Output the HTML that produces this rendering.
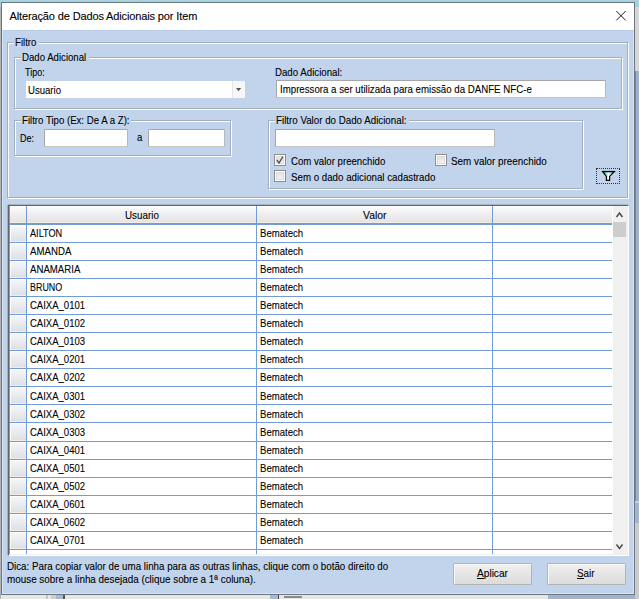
<!DOCTYPE html>
<html><head><meta charset="utf-8"><style>
html,body{margin:0;padding:0;}
body{width:639px;height:599px;position:relative;overflow:hidden;font-family:"Liberation Sans", sans-serif;font-size:11px;}
.t{position:absolute;white-space:nowrap;line-height:13px;transform-origin:0 0;-webkit-text-stroke:0.1px #000;}
u{text-decoration:underline;text-underline-offset:0px;}
</style></head><body>
<div style="position:absolute;left:0px;top:0px;width:639px;height:599px;background:#e6e6e6;"></div>
<div style="position:absolute;left:0px;top:0px;width:639px;height:7px;background:#a6d2de;"></div>
<div style="position:absolute;left:0px;top:7px;width:1px;height:592px;background:#b4b4b4;"></div>
<div style="position:absolute;left:635px;top:7px;width:4px;height:64px;background:#d6d6d6;"></div>
<div style="position:absolute;left:635px;top:71px;width:4px;height:430px;background:#9fb1c9;"></div>
<div style="position:absolute;left:635px;top:71px;width:1px;height:430px;background:#7a8594;"></div>
<div style="position:absolute;left:635px;top:501px;width:4px;height:2px;background:#d0d0d0;"></div>
<div style="position:absolute;left:635px;top:503px;width:4px;height:20px;background:#a5b6cc;"></div>
<div style="position:absolute;left:635px;top:523px;width:4px;height:76px;background:#c9cbcd;"></div>
<div style="position:absolute;left:548px;top:595px;width:87px;height:4px;background:#a3b3cb;"></div>
<div style="position:absolute;left:46px;top:595px;width:2px;height:4px;background:#c4c4c4;"></div>
<div style="position:absolute;left:51px;top:595px;width:5px;height:4px;background:#cfcfcf;"></div>
<div style="position:absolute;left:56px;top:595px;width:7px;height:4px;background:#a9b9d0;"></div>
<div style="position:absolute;left:63px;top:595px;width:2px;height:4px;background:#555;"></div>
<div style="position:absolute;left:270px;top:595px;width:8px;height:4px;background:#a9b9d0;"></div>
<div style="position:absolute;left:278px;top:595px;width:1px;height:4px;background:#444;"></div>
<div style="position:absolute;left:284px;top:596px;width:18px;height:2px;background:#8a8a8a;"></div>
<div style="position:absolute;left:1px;top:2px;width:634px;height:593px;box-sizing:border-box;border:1px solid #6e7681;background:#fff;"></div>
<div style="position:absolute;left:2px;top:30px;width:632px;height:564px;background:#c2d4eb;"></div>
<div style="position:absolute;left:2px;top:30px;width:1px;height:564px;background:#d3e4fb;"></div>
<div style="position:absolute;left:633px;top:30px;width:1px;height:564px;background:#d3e4fb;"></div>
<div style="position:absolute;left:2px;top:593px;width:632px;height:1px;background:#d3e4fb;"></div>
<div style="position:absolute;left:2px;top:30px;width:632px;height:1px;background:#b9cce6;"></div>
<div class="t" style="left:9.5px;top:10px;letter-spacing:-0.13px;">Alteração de Dados Adicionais por Item</div>
<svg style="position:absolute;left:0;top:0" width="639" height="40"><path d="M616.3 11 L625.7 20.4 M625.7 11 L616.3 20.4" stroke="#1a1a1a" stroke-width="1" fill="none"/></svg>
<div style="position:absolute;left:8px;top:43px;width:621px;height:156px;box-sizing:border-box;border:1px solid #fff;"></div>
<div style="position:absolute;left:7px;top:42px;width:621px;height:156px;box-sizing:border-box;border:1px solid #a4aebb;"></div>
<div style="position:absolute;left:13.5px;top:41px;width:25px;height:4px;background:#c2d4eb;"></div>
<div class="t" style="left:14.5px;top:36px;transform:scaleX(0.875);color:#000;">Filtro</div>
<div style="position:absolute;left:15px;top:58px;width:608px;height:52px;box-sizing:border-box;border:1px solid #fff;"></div>
<div style="position:absolute;left:14px;top:57px;width:608px;height:52px;box-sizing:border-box;border:1px solid #a4aebb;"></div>
<div style="position:absolute;left:20.5px;top:56px;width:68px;height:4px;background:#c2d4eb;"></div>
<div class="t" style="left:21.5px;top:51px;transform:scaleX(0.875);color:#000;">Dado Adicional</div>
<div style="position:absolute;left:15px;top:121px;width:217px;height:36px;box-sizing:border-box;border:1px solid #fff;"></div>
<div style="position:absolute;left:14px;top:120px;width:217px;height:36px;box-sizing:border-box;border:1px solid #a4aebb;"></div>
<div style="position:absolute;left:20.5px;top:119px;width:110px;height:4px;background:#c2d4eb;"></div>
<div class="t" style="left:21.5px;top:114px;transform:scaleX(0.875);color:#000;">Filtro Tipo (Ex: De A a Z):</div>
<div style="position:absolute;left:269px;top:121px;width:315px;height:69px;box-sizing:border-box;border:1px solid #fff;"></div>
<div style="position:absolute;left:268px;top:120px;width:315px;height:69px;box-sizing:border-box;border:1px solid #a4aebb;"></div>
<div style="position:absolute;left:274.5px;top:119px;width:134px;height:4px;background:#c2d4eb;"></div>
<div class="t" style="left:275.5px;top:114px;transform:scaleX(0.887);color:#000;">Filtro Valor do Dado Adicional:</div>
<div class="t" style="left:25px;top:66px;transform:scaleX(0.82);color:#000;">Tipo:</div>
<div style="position:absolute;left:26px;top:81px;width:219px;height:17px;background:#fff;"></div>
<div style="position:absolute;left:232px;top:81px;width:1px;height:17px;background:#e6e6e6;"></div>
<div style="position:absolute;left:233px;top:81px;width:12px;height:17px;background:#f7f7f7;"></div>
<svg style="position:absolute;left:0;top:0" width="260" height="100"><path d="M236 88 L241.2 88 L238.6 91.2 Z" fill="#555"/></svg>
<div class="t" style="left:28px;top:84px;transform:scaleX(0.87);color:#000;">Usuario</div>
<div class="t" style="left:275px;top:66px;transform:scaleX(0.88);color:#000;">Dado Adicional:</div>
<div style="position:absolute;left:276px;top:80px;width:330px;height:18px;box-sizing:border-box;border:1px solid #a6a6a6;border-bottom-color:#c4c4c4;border-right-color:#b8b8b8;background:#fff;border-radius:1px;"></div>
<div class="t" style="left:280px;top:83px;transform:scaleX(0.88);color:#000;">Impressora a ser utilizada para emissão da DANFE NFC-e</div>
<div class="t" style="left:19.75px;top:132px;transform:scaleX(0.82);color:#000;">De:</div>
<div style="position:absolute;left:44px;top:129px;width:84px;height:18px;box-sizing:border-box;border:1px solid #a6a6a6;border-bottom-color:#c4c4c4;border-right-color:#b8b8b8;background:#fff;border-radius:1px;"></div>
<div class="t" style="left:136.5px;top:131px;transform:scaleX(0.87);color:#000;">a</div>
<div style="position:absolute;left:148px;top:129px;width:77px;height:18px;box-sizing:border-box;border:1px solid #a6a6a6;border-bottom-color:#c4c4c4;border-right-color:#b8b8b8;background:#fff;border-radius:1px;"></div>
<div style="position:absolute;left:275px;top:129px;width:220px;height:18px;box-sizing:border-box;border:1px solid #a6a6a6;border-bottom-color:#c4c4c4;border-right-color:#b8b8b8;background:#fff;border-radius:1px;"></div>
<div style="position:absolute;left:274px;top:154px;width:12px;height:12px;box-sizing:border-box;border:1px solid #8e8f8f;background:#fcfcfc;"></div>
<div style="position:absolute;left:276px;top:156px;width:8px;height:8px;background:linear-gradient(#e4e4e4,#f0f0f0);box-sizing:border-box;border:1px solid #dcdcdc;"></div>
<svg style="position:absolute;left:274px;top:154px" width="12" height="12"><path d="M2.8 5.9 L5 9 L8.9 2.6" stroke="#505050" stroke-width="1.3" fill="none"/></svg>
<div class="t" style="left:291px;top:155px;transform:scaleX(0.876);color:#000;">Com valor preenchido</div>
<div style="position:absolute;left:435px;top:154px;width:12px;height:12px;box-sizing:border-box;border:1px solid #8e8f8f;background:#fcfcfc;"></div>
<div style="position:absolute;left:437px;top:156px;width:8px;height:8px;background:linear-gradient(#e4e4e4,#f0f0f0);box-sizing:border-box;border:1px solid #dcdcdc;"></div>
<div class="t" style="left:451px;top:155px;transform:scaleX(0.895);color:#000;">Sem valor preenchido</div>
<div style="position:absolute;left:274px;top:170px;width:12px;height:12px;box-sizing:border-box;border:1px solid #8e8f8f;background:#fcfcfc;"></div>
<div style="position:absolute;left:276px;top:172px;width:8px;height:8px;background:linear-gradient(#e4e4e4,#f0f0f0);box-sizing:border-box;border:1px solid #dcdcdc;"></div>
<div class="t" style="left:291px;top:171px;transform:scaleX(0.884);color:#000;">Sem o dado adicional cadastrado</div>
<div style="position:absolute;left:596px;top:168px;width:24px;height:16px;box-sizing:border-box;border:1px dotted #333;"></div>
<svg style="position:absolute;left:590px;top:160px" width="40" height="30"><defs><linearGradient id="fg" x1="0" x2="1" y1="0" y2="0"><stop offset="0" stop-color="#0c9a88"/><stop offset="0.3" stop-color="#8fd8cc"/><stop offset="0.5" stop-color="#ffffff"/><stop offset="0.7" stop-color="#9fdcd2"/><stop offset="1" stop-color="#0f8f80"/></linearGradient></defs><path d="M12.6 11.6 L24.4 11.6 L19.6 16.4 L19.6 20.4 L16.4 20.4 L16.4 16.4 Z" fill="url(#fg)" stroke="#000" stroke-width="1.2" stroke-linejoin="miter"/><path d="M12.2 11.4 H24.8" stroke="#000" stroke-width="1"/></svg>
<div style="position:absolute;left:8px;top:205px;width:621px;height:351px;box-sizing:border-box;border-style:solid;border-width:1px;border-color:#646464 #fff #fff #646464;background:#fff;"></div>
<div style="position:absolute;left:9px;top:554px;width:619px;height:1px;background:#efefef;"></div>
<div style="position:absolute;left:7px;top:205px;width:1px;height:350px;background:#a9acb2;"></div>
<div style="position:absolute;left:8px;top:204px;width:620px;height:1px;background:#aab5c4;"></div>
<div style="position:absolute;left:627px;top:206px;width:1px;height:349px;background:#efefef;"></div>
<div style="position:absolute;left:9px;top:206px;width:603px;height:17px;background:linear-gradient(#fcfcfc,#f1f1f1 40%,#e3e3e6);"></div>
<div style="position:absolute;left:9px;top:206px;width:603px;height:1px;background:#fff;"></div>
<div style="position:absolute;left:9px;top:222px;width:603px;height:1px;background:#f3ede4;"></div>
<div style="position:absolute;left:9px;top:226px;width:17px;height:16px;background:linear-gradient(#f6f7f8,#e9ebee 50%,#dcdfe4);"></div>
<div style="position:absolute;left:9px;top:226px;width:17px;height:1px;background:#fff;"></div>
<div style="position:absolute;left:10px;top:226px;width:1px;height:16px;background:#fafbfc;"></div>
<div style="position:absolute;left:9px;top:241px;width:17px;height:1px;background:#f3ede4;"></div>
<div style="position:absolute;left:9px;top:243px;width:17px;height:17px;background:linear-gradient(#f6f7f8,#e9ebee 50%,#dcdfe4);"></div>
<div style="position:absolute;left:9px;top:243px;width:17px;height:1px;background:#fff;"></div>
<div style="position:absolute;left:10px;top:243px;width:1px;height:17px;background:#fafbfc;"></div>
<div style="position:absolute;left:9px;top:259px;width:17px;height:1px;background:#f3ede4;"></div>
<div style="position:absolute;left:9px;top:261px;width:17px;height:17px;background:linear-gradient(#f6f7f8,#e9ebee 50%,#dcdfe4);"></div>
<div style="position:absolute;left:9px;top:261px;width:17px;height:1px;background:#fff;"></div>
<div style="position:absolute;left:10px;top:261px;width:1px;height:17px;background:#fafbfc;"></div>
<div style="position:absolute;left:9px;top:277px;width:17px;height:1px;background:#f3ede4;"></div>
<div style="position:absolute;left:9px;top:279px;width:17px;height:17px;background:linear-gradient(#f6f7f8,#e9ebee 50%,#dcdfe4);"></div>
<div style="position:absolute;left:9px;top:279px;width:17px;height:1px;background:#fff;"></div>
<div style="position:absolute;left:10px;top:279px;width:1px;height:17px;background:#fafbfc;"></div>
<div style="position:absolute;left:9px;top:295px;width:17px;height:1px;background:#f3ede4;"></div>
<div style="position:absolute;left:9px;top:297px;width:17px;height:17px;background:linear-gradient(#f6f7f8,#e9ebee 50%,#dcdfe4);"></div>
<div style="position:absolute;left:9px;top:297px;width:17px;height:1px;background:#fff;"></div>
<div style="position:absolute;left:10px;top:297px;width:1px;height:17px;background:#fafbfc;"></div>
<div style="position:absolute;left:9px;top:313px;width:17px;height:1px;background:#f3ede4;"></div>
<div style="position:absolute;left:9px;top:315px;width:17px;height:17px;background:linear-gradient(#f6f7f8,#e9ebee 50%,#dcdfe4);"></div>
<div style="position:absolute;left:9px;top:315px;width:17px;height:1px;background:#fff;"></div>
<div style="position:absolute;left:10px;top:315px;width:1px;height:17px;background:#fafbfc;"></div>
<div style="position:absolute;left:9px;top:331px;width:17px;height:1px;background:#f3ede4;"></div>
<div style="position:absolute;left:9px;top:333px;width:17px;height:17px;background:linear-gradient(#f6f7f8,#e9ebee 50%,#dcdfe4);"></div>
<div style="position:absolute;left:9px;top:333px;width:17px;height:1px;background:#fff;"></div>
<div style="position:absolute;left:10px;top:333px;width:1px;height:17px;background:#fafbfc;"></div>
<div style="position:absolute;left:9px;top:349px;width:17px;height:1px;background:#f3ede4;"></div>
<div style="position:absolute;left:9px;top:351px;width:17px;height:17px;background:linear-gradient(#f6f7f8,#e9ebee 50%,#dcdfe4);"></div>
<div style="position:absolute;left:9px;top:351px;width:17px;height:1px;background:#fff;"></div>
<div style="position:absolute;left:10px;top:351px;width:1px;height:17px;background:#fafbfc;"></div>
<div style="position:absolute;left:9px;top:367px;width:17px;height:1px;background:#f3ede4;"></div>
<div style="position:absolute;left:9px;top:369px;width:17px;height:17px;background:linear-gradient(#f6f7f8,#e9ebee 50%,#dcdfe4);"></div>
<div style="position:absolute;left:9px;top:369px;width:17px;height:1px;background:#fff;"></div>
<div style="position:absolute;left:10px;top:369px;width:1px;height:17px;background:#fafbfc;"></div>
<div style="position:absolute;left:9px;top:385px;width:17px;height:1px;background:#f3ede4;"></div>
<div style="position:absolute;left:9px;top:387px;width:17px;height:17px;background:linear-gradient(#f6f7f8,#e9ebee 50%,#dcdfe4);"></div>
<div style="position:absolute;left:9px;top:387px;width:17px;height:1px;background:#fff;"></div>
<div style="position:absolute;left:10px;top:387px;width:1px;height:17px;background:#fafbfc;"></div>
<div style="position:absolute;left:9px;top:403px;width:17px;height:1px;background:#f3ede4;"></div>
<div style="position:absolute;left:9px;top:405px;width:17px;height:17px;background:linear-gradient(#f6f7f8,#e9ebee 50%,#dcdfe4);"></div>
<div style="position:absolute;left:9px;top:405px;width:17px;height:1px;background:#fff;"></div>
<div style="position:absolute;left:10px;top:405px;width:1px;height:17px;background:#fafbfc;"></div>
<div style="position:absolute;left:9px;top:421px;width:17px;height:1px;background:#f3ede4;"></div>
<div style="position:absolute;left:9px;top:423px;width:17px;height:18px;background:linear-gradient(#f6f7f8,#e9ebee 50%,#dcdfe4);"></div>
<div style="position:absolute;left:9px;top:423px;width:17px;height:1px;background:#fff;"></div>
<div style="position:absolute;left:10px;top:423px;width:1px;height:18px;background:#fafbfc;"></div>
<div style="position:absolute;left:9px;top:440px;width:17px;height:1px;background:#f3ede4;"></div>
<div style="position:absolute;left:9px;top:442px;width:17px;height:17px;background:linear-gradient(#f6f7f8,#e9ebee 50%,#dcdfe4);"></div>
<div style="position:absolute;left:9px;top:442px;width:17px;height:1px;background:#fff;"></div>
<div style="position:absolute;left:10px;top:442px;width:1px;height:17px;background:#fafbfc;"></div>
<div style="position:absolute;left:9px;top:458px;width:17px;height:1px;background:#f3ede4;"></div>
<div style="position:absolute;left:9px;top:460px;width:17px;height:17px;background:linear-gradient(#f6f7f8,#e9ebee 50%,#dcdfe4);"></div>
<div style="position:absolute;left:9px;top:460px;width:17px;height:1px;background:#fff;"></div>
<div style="position:absolute;left:10px;top:460px;width:1px;height:17px;background:#fafbfc;"></div>
<div style="position:absolute;left:9px;top:476px;width:17px;height:1px;background:#f3ede4;"></div>
<div style="position:absolute;left:9px;top:478px;width:17px;height:17px;background:linear-gradient(#f6f7f8,#e9ebee 50%,#dcdfe4);"></div>
<div style="position:absolute;left:9px;top:478px;width:17px;height:1px;background:#fff;"></div>
<div style="position:absolute;left:10px;top:478px;width:1px;height:17px;background:#fafbfc;"></div>
<div style="position:absolute;left:9px;top:494px;width:17px;height:1px;background:#f3ede4;"></div>
<div style="position:absolute;left:9px;top:496px;width:17px;height:17px;background:linear-gradient(#f6f7f8,#e9ebee 50%,#dcdfe4);"></div>
<div style="position:absolute;left:9px;top:496px;width:17px;height:1px;background:#fff;"></div>
<div style="position:absolute;left:10px;top:496px;width:1px;height:17px;background:#fafbfc;"></div>
<div style="position:absolute;left:9px;top:512px;width:17px;height:1px;background:#f3ede4;"></div>
<div style="position:absolute;left:9px;top:514px;width:17px;height:17px;background:linear-gradient(#f6f7f8,#e9ebee 50%,#dcdfe4);"></div>
<div style="position:absolute;left:9px;top:514px;width:17px;height:1px;background:#fff;"></div>
<div style="position:absolute;left:10px;top:514px;width:1px;height:17px;background:#fafbfc;"></div>
<div style="position:absolute;left:9px;top:530px;width:17px;height:1px;background:#f3ede4;"></div>
<div style="position:absolute;left:9px;top:532px;width:17px;height:17px;background:linear-gradient(#f6f7f8,#e9ebee 50%,#dcdfe4);"></div>
<div style="position:absolute;left:9px;top:532px;width:17px;height:1px;background:#fff;"></div>
<div style="position:absolute;left:10px;top:532px;width:1px;height:17px;background:#fafbfc;"></div>
<div style="position:absolute;left:9px;top:548px;width:17px;height:1px;background:#f3ede4;"></div>
<div style="position:absolute;left:9px;top:550px;width:17px;height:4px;background:#fff;"></div>
<div style="position:absolute;left:9px;top:223px;width:603px;height:2px;background:#739cd4;"></div>
<div style="position:absolute;left:9px;top:242px;width:603px;height:1px;background:#739cd4;"></div>
<div style="position:absolute;left:9px;top:260px;width:603px;height:1px;background:#739cd4;"></div>
<div style="position:absolute;left:9px;top:278px;width:603px;height:1px;background:#739cd4;"></div>
<div style="position:absolute;left:9px;top:296px;width:603px;height:1px;background:#739cd4;"></div>
<div style="position:absolute;left:9px;top:314px;width:603px;height:1px;background:#739cd4;"></div>
<div style="position:absolute;left:9px;top:332px;width:603px;height:1px;background:#739cd4;"></div>
<div style="position:absolute;left:9px;top:350px;width:603px;height:1px;background:#739cd4;"></div>
<div style="position:absolute;left:9px;top:368px;width:603px;height:1px;background:#739cd4;"></div>
<div style="position:absolute;left:9px;top:386px;width:603px;height:1px;background:#739cd4;"></div>
<div style="position:absolute;left:9px;top:404px;width:603px;height:1px;background:#739cd4;"></div>
<div style="position:absolute;left:9px;top:422px;width:603px;height:1px;background:#739cd4;"></div>
<div style="position:absolute;left:9px;top:441px;width:603px;height:1px;background:#739cd4;"></div>
<div style="position:absolute;left:9px;top:459px;width:603px;height:1px;background:#739cd4;"></div>
<div style="position:absolute;left:9px;top:477px;width:603px;height:1px;background:#739cd4;"></div>
<div style="position:absolute;left:9px;top:495px;width:603px;height:1px;background:#739cd4;"></div>
<div style="position:absolute;left:9px;top:513px;width:603px;height:1px;background:#739cd4;"></div>
<div style="position:absolute;left:9px;top:531px;width:603px;height:1px;background:#739cd4;"></div>
<div style="position:absolute;left:9px;top:549px;width:603px;height:1px;background:#739cd4;"></div>
<div style="position:absolute;left:9px;top:206px;width:1px;height:348px;background:#8d98a6;"></div>
<div style="position:absolute;left:26px;top:206px;width:1px;height:348px;background:#739cd4;"></div>
<div style="position:absolute;left:256px;top:206px;width:1px;height:348px;background:#739cd4;"></div>
<div style="position:absolute;left:492px;top:206px;width:1px;height:348px;background:#739cd4;"></div>
<div class="t" style="left:125px;top:208.5px;transform:scaleX(0.893);color:#000;">Usuario</div>
<div class="t" style="left:363px;top:208.5px;transform:scaleX(0.945);color:#000;">Valor</div>
<div class="t" style="left:29.5px;top:227px;transform:scaleX(0.832);color:#000;">AILTON</div>
<div class="t" style="left:259.5px;top:227px;transform:scaleX(0.87);color:#000;">Bematech</div>
<div class="t" style="left:29.5px;top:245px;transform:scaleX(0.878);color:#000;">AMANDA</div>
<div class="t" style="left:259.5px;top:245px;transform:scaleX(0.87);color:#000;">Bematech</div>
<div class="t" style="left:29.5px;top:263px;transform:scaleX(0.876);color:#000;">ANAMARIA</div>
<div class="t" style="left:259.5px;top:263px;transform:scaleX(0.87);color:#000;">Bematech</div>
<div class="t" style="left:29.5px;top:281px;transform:scaleX(0.81);color:#000;">BRUNO</div>
<div class="t" style="left:259.5px;top:281px;transform:scaleX(0.87);color:#000;">Bematech</div>
<div class="t" style="left:29.5px;top:299px;transform:scaleX(0.865);color:#000;">CAIXA_0101</div>
<div class="t" style="left:259.5px;top:299px;transform:scaleX(0.87);color:#000;">Bematech</div>
<div class="t" style="left:29.5px;top:317px;transform:scaleX(0.865);color:#000;">CAIXA_0102</div>
<div class="t" style="left:259.5px;top:317px;transform:scaleX(0.87);color:#000;">Bematech</div>
<div class="t" style="left:29.5px;top:335px;transform:scaleX(0.865);color:#000;">CAIXA_0103</div>
<div class="t" style="left:259.5px;top:335px;transform:scaleX(0.87);color:#000;">Bematech</div>
<div class="t" style="left:29.5px;top:353px;transform:scaleX(0.865);color:#000;">CAIXA_0201</div>
<div class="t" style="left:259.5px;top:353px;transform:scaleX(0.87);color:#000;">Bematech</div>
<div class="t" style="left:29.5px;top:371px;transform:scaleX(0.865);color:#000;">CAIXA_0202</div>
<div class="t" style="left:259.5px;top:371px;transform:scaleX(0.87);color:#000;">Bematech</div>
<div class="t" style="left:29.5px;top:390px;transform:scaleX(0.865);color:#000;">CAIXA_0301</div>
<div class="t" style="left:259.5px;top:390px;transform:scaleX(0.87);color:#000;">Bematech</div>
<div class="t" style="left:29.5px;top:408px;transform:scaleX(0.865);color:#000;">CAIXA_0302</div>
<div class="t" style="left:259.5px;top:408px;transform:scaleX(0.87);color:#000;">Bematech</div>
<div class="t" style="left:29.5px;top:426px;transform:scaleX(0.865);color:#000;">CAIXA_0303</div>
<div class="t" style="left:259.5px;top:426px;transform:scaleX(0.87);color:#000;">Bematech</div>
<div class="t" style="left:29.5px;top:444px;transform:scaleX(0.865);color:#000;">CAIXA_0401</div>
<div class="t" style="left:259.5px;top:444px;transform:scaleX(0.87);color:#000;">Bematech</div>
<div class="t" style="left:29.5px;top:462px;transform:scaleX(0.865);color:#000;">CAIXA_0501</div>
<div class="t" style="left:259.5px;top:462px;transform:scaleX(0.87);color:#000;">Bematech</div>
<div class="t" style="left:29.5px;top:480px;transform:scaleX(0.865);color:#000;">CAIXA_0502</div>
<div class="t" style="left:259.5px;top:480px;transform:scaleX(0.87);color:#000;">Bematech</div>
<div class="t" style="left:29.5px;top:498px;transform:scaleX(0.865);color:#000;">CAIXA_0601</div>
<div class="t" style="left:259.5px;top:498px;transform:scaleX(0.87);color:#000;">Bematech</div>
<div class="t" style="left:29.5px;top:516px;transform:scaleX(0.865);color:#000;">CAIXA_0602</div>
<div class="t" style="left:259.5px;top:516px;transform:scaleX(0.87);color:#000;">Bematech</div>
<div class="t" style="left:29.5px;top:534px;transform:scaleX(0.865);color:#000;">CAIXA_0701</div>
<div class="t" style="left:259.5px;top:534px;transform:scaleX(0.87);color:#000;">Bematech</div>
<div style="position:absolute;left:612px;top:206px;width:1px;height:348px;background:#fff;"></div>
<div style="position:absolute;left:613px;top:206px;width:15px;height:348px;background:#f0f0f0;"></div>
<div style="position:absolute;left:613px;top:222px;width:13px;height:15px;background:#cdcdcd;"></div>
<svg style="position:absolute;left:600px;top:200px" width="39" height="360"><path d="M16.5 17 L19.5 13 L22.5 17" stroke="#505050" stroke-width="1.6" fill="none"/><path d="M16.5 344.5 L19.5 348.5 L22.5 344.5" stroke="#505050" stroke-width="1.6" fill="none"/></svg>
<div class="t" style="left:6.75px;top:559.5px;transform:scaleX(0.888);color:#000;">Dica: Para copiar valor de uma linha para as outras linhas, clique com o botão direito do</div>
<div class="t" style="left:6.75px;top:572.5px;transform:scaleX(0.897);color:#000;">mouse sobre a linha desejada (clique sobre a 1ª coluna).</div>
<div style="position:absolute;left:453px;top:563px;width:79px;height:22px;box-sizing:border-box;border:1px solid #b4b4b4;border-radius:1px;background:linear-gradient(#f0f0f0,#e6e6e6 50%,#dcdcdc);box-shadow:inset 1px 1px 0 #f8f8f8;"></div>
<div class="t" style="left:477px;top:567px;transform:scaleX(0.92);color:#000;">Aplicar</div>
<div style="position:absolute;left:477px;top:578px;width:7px;height:1px;background:#000;"></div>
<div style="position:absolute;left:547px;top:563px;width:79px;height:22px;box-sizing:border-box;border:1px solid #b4b4b4;border-radius:1px;background:linear-gradient(#f0f0f0,#e6e6e6 50%,#dcdcdc);box-shadow:inset 1px 1px 0 #f8f8f8;"></div>
<div class="t" style="left:577px;top:567px;transform:scaleX(0.89);color:#000;">Sair</div>
<div style="position:absolute;left:577px;top:578px;width:7px;height:1px;background:#000;"></div>
</body></html>
